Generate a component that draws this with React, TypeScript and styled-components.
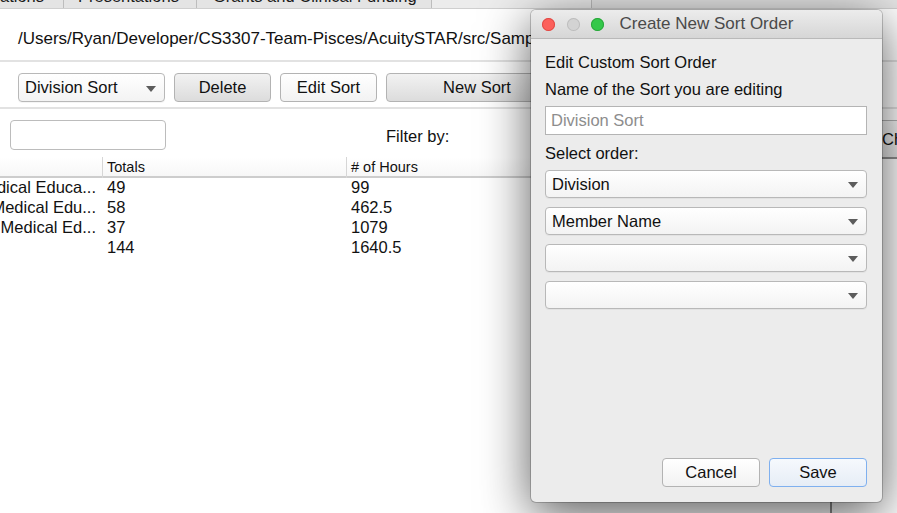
import styled, { createGlobalStyle } from "styled-components";

const GlobalStyle = createGlobalStyle`
  html, body {
    margin: 0;
    padding: 0;
    background: #ffffff;
  }
  body {
    font-family: "Liberation Sans", Arial, sans-serif;
    color: #111;
    overflow: hidden;
  }
`;

const Window = styled.div`
  position: relative;
  width: 897px;
  height: 513px;
  overflow: hidden;
  background: #ffffff;
  display: flex;
  flex-direction: column;
`;

const TabStrip = styled.div`
  display: flex;
  height: 21px;
  margin-top: -13px;
  background: #e4e4e4;
  border-bottom: 1px solid #cfcfcf;
  flex-shrink: 0;
`;

const Tab = styled.div<{ w: number; pad: number; light?: boolean }>`
  width: ${(p) => p.w}px;
  padding-left: ${(p) => p.pad}px;
  box-sizing: border-box;
  border-right: 1px solid #bdbdbd;
  background: ${(p) => (p.light ? "#ececec" : "#e4e4e4")};
  font-size: 16.5px;
  line-height: 18px;
  white-space: nowrap;
  overflow: hidden;
  color: #1a1a1a;
`;

const PathRow = styled.div`
  height: 53px;
  padding-left: 18px;
  padding-top: 8px;
  display: flex;
  align-items: center;
  box-sizing: border-box;
  font-size: 17px;
  white-space: nowrap;
  border-bottom: 2px solid #e2e2e2;
  flex-shrink: 0;
`;

const Toolbar = styled.div`
  height: 47px;
  display: flex;
  align-items: flex-start;
  gap: 9px;
  padding-left: 18px;
  padding-top: 11px;
  box-sizing: border-box;
  border-bottom: 2px solid #e2e2e2;
  flex-shrink: 0;
`;

const ComboBox = styled.div<{ w?: number; tall?: number }>`
  position: relative;
  width: ${(p) => (p.w ? `${p.w}px` : "100%")};
  height: ${(p) => p.tall ?? 28}px;
  box-sizing: border-box;
  border: 1px solid #b8b8b8;
  border-radius: 4px;
  background: linear-gradient(#ffffff, #f3f3f3);
  box-shadow: 0 1px 0 rgba(0, 0, 0, 0.04);
  display: flex;
  align-items: center;
  padding-left: 6px;
  font-size: 16.5px;
  flex-shrink: 0;
`;

const Arrow = styled.span`
  position: absolute;
  right: 8px;
  top: 50%;
  margin-top: -2px;
  width: 0;
  height: 0;
  border-left: 5px solid transparent;
  border-right: 5px solid transparent;
  border-top: 6px solid #5c5c5c;
`;

const Button = styled.div<{ w: number; shade?: "grey" | "white" | "blue" }>`
  width: ${(p) => p.w}px;
  height: 29px;
  box-sizing: border-box;
  flex-shrink: 0;
  border-radius: 4px;
  border: 1px solid
    ${(p) => (p.shade === "blue" ? "#7fb0ef" : "#b3b3b3")};
  background: ${(p) =>
    p.shade === "grey"
      ? "linear-gradient(#f2f2f2, #dcdcdc)"
      : p.shade === "blue"
      ? "linear-gradient(#f6f9fd, #e6edf6)"
      : "linear-gradient(#ffffff, #f2f2f2)"};
  display: flex;
  align-items: center;
  justify-content: center;
  font-size: 16.5px;
  color: #111;
`;

const FilterRow = styled.div`
  height: 48px;
  display: flex;
  align-items: flex-start;
  padding-left: 10px;
  padding-top: 11px;
  box-sizing: border-box;
  flex-shrink: 0;
`;

const SearchBox = styled.div`
  width: 156px;
  height: 30px;
  box-sizing: border-box;
  border: 1px solid #bcbcbc;
  border-radius: 4px;
  background: #fff;
  flex-shrink: 0;
`;

const FilterLabel = styled.div`
  margin-left: 220px;
  margin-top: 6px;
  font-size: 16.5px;
  line-height: 20px;
  flex-shrink: 0;
`;

const SideButton = styled.div`
  margin-left: auto;
  margin-right: -120px;
  width: 140px;
  height: 39px;
  box-sizing: border-box;
  border: 1px solid #b3b3b3;
  border-bottom: 2px solid #8f8f8f;
  background: linear-gradient(#f6f6f6, #e6e6e6);
  display: flex;
  align-items: center;
  padding-left: 4px;
  font-size: 16.5px;
  flex-shrink: 0;
`;

const Content = styled.div`
  flex: 1;
  display: flex;
  min-height: 0;
`;

const TablePane = styled.div`
  width: 830px;
  flex-shrink: 0;
  display: flex;
  flex-direction: column;
`;

const Divider = styled.div`
  width: 2px;
  background: #8c8c8c;
  flex-shrink: 0;
`;

const HeaderRow = styled.div`
  display: grid;
  grid-template-columns: 102px 244px 1fr;
  height: 19px;
  border-bottom: 2px solid #cdcdcd;
  background: linear-gradient(#ffffff, #f7f7f7);
`;

const HeaderCell = styled.div<{ first?: boolean }>`
  border-left: ${(p) => (p.first ? "none" : "1px solid #d6d6d6")};
  padding-left: 4px;
  font-size: 14.5px;
  line-height: 21px;
  white-space: nowrap;
`;

const Row = styled.div`
  display: grid;
  grid-template-columns: 102px 244px 1fr;
  height: 20px;
  font-size: 16.5px;
  line-height: 19px;
  white-space: nowrap;
`;

const NameCell = styled.div`
  overflow: hidden;
  display: flex;
  justify-content: flex-end;
  padding-right: 6px;
`;

const Cell = styled.div`
  padding-left: 5px;
`;

const Dialog = styled.div`
  position: absolute;
  left: 531px;
  top: 10px;
  width: 351px;
  height: 492px;
  border-radius: 5px;
  background: #ececec;
  box-shadow: 0 0 0 1px rgba(0, 0, 0, 0.2), 0 12px 50px rgba(0, 0, 0, 0.66);
  display: flex;
  flex-direction: column;
  overflow: hidden;
`;

const TitleBar = styled.div`
  height: 29px;
  flex-shrink: 0;
  box-sizing: border-box;
  background: linear-gradient(#ececec, #d6d6d6);
  border-bottom: 1px solid #b9b9b9;
  display: flex;
  align-items: center;
  padding-left: 11px;
`;

const Light = styled.span<{ fill: string; edge: string }>`
  width: 13px;
  height: 13px;
  border-radius: 50%;
  background: ${(p) => p.fill};
  box-shadow: inset 0 0 0 1px ${(p) => p.edge};
  margin-right: 11.5px;
  flex-shrink: 0;
`;

const Title = styled.div`
  margin-left: 4px;
  font-size: 17px;
  color: #4a4a4a;
  white-space: nowrap;
`;

const DialogBody = styled.div`
  flex: 1;
  display: flex;
  flex-direction: column;
  padding: 13px 15px 15px 14px;
`;

const Label = styled.div<{ gap?: number }>`
  font-size: 16.5px;
  line-height: 20px;
  margin-bottom: ${(p) => p.gap ?? 7}px;
`;

const TextField = styled.div`
  height: 29px;
  box-sizing: border-box;
  border: 1px solid #b4b4b4;
  background: #fff;
  display: flex;
  align-items: center;
  padding-left: 5px;
  font-size: 16.5px;
  color: #8d8d8d;
  margin-bottom: 8px;
`;

const OrderList = styled.div`
  display: flex;
  flex-direction: column;
  gap: 9px;
`;

const Footer = styled.div`
  margin-top: auto;
  display: flex;
  justify-content: flex-end;
  gap: 9px;
`;

const rows = [
  { name: "Undergraduate Medical Educa...", total: "49", hours: "99" },
  { name: "Postgraduate Medical Edu...", total: "58", hours: "462.5" },
  { name: "Continuing Medical Ed...", total: "37", hours: "1079" },
  { name: "", total: "144", hours: "1640.5" },
];

const orders = ["Division", "Member Name", "", ""];

export default function App() {
  return (
    <>
      <GlobalStyle />
      <Window>
        <TabStrip>
          <Tab w={64} pad={0}>
            ations
          </Tab>
          <Tab w={133} pad={14}>
            Presentations
          </Tab>
          <Tab w={235} pad={16}>
            Grants and Clinical Funding
          </Tab>
          <Tab w={160} pad={14} light />
        </TabStrip>
        <PathRow>/Users/Ryan/Developer/CS3307-Team-Pisces/AcuitySTAR/src/Sample_Data/Teaching_sample.csv</PathRow>
        <Toolbar>
          <ComboBox w={147} tall={29}>
            Division Sort
            <Arrow />
          </ComboBox>
          <Button w={97} shade="grey">
            Delete
          </Button>
          <Button w={97} shade="white">
            Edit Sort
          </Button>
          <Button w={182} shade="grey">
            New Sort
          </Button>
        </Toolbar>
        <FilterRow>
          <SearchBox />
          <FilterLabel>Filter by:</FilterLabel>
          <SideButton>Choose</SideButton>
        </FilterRow>
        <Content>
          <TablePane>
            <HeaderRow>
              <HeaderCell first />
              <HeaderCell>Totals</HeaderCell>
              <HeaderCell># of Hours</HeaderCell>
            </HeaderRow>
            {rows.map((r) => (
              <Row key={r.total}>
                <NameCell>{r.name}</NameCell>
                <Cell>{r.total}</Cell>
                <Cell>{r.hours}</Cell>
              </Row>
            ))}
          </TablePane>
          <Divider />
        </Content>

        <Dialog>
          <TitleBar>
            <Light fill="#fc605b" edge="#df4a45" />
            <Light fill="#d3d3d3" edge="#bdbdbd" />
            <Light fill="#34c84a" edge="#2aa53b" />
            <Title>Create New Sort Order</Title>
          </TitleBar>
          <DialogBody>
            <Label>Edit Custom Sort Order</Label>
            <Label>Name of the Sort you are editing</Label>
            <TextField>Division Sort</TextField>
            <Label>Select order:</Label>
            <OrderList>
              {orders.map((o, i) => (
                <ComboBox key={i}>
                  {o}
                  <Arrow />
                </ComboBox>
              ))}
            </OrderList>
            <Footer>
              <Button w={98} shade="white">
                Cancel
              </Button>
              <Button w={98} shade="blue">
                Save
              </Button>
            </Footer>
          </DialogBody>
        </Dialog>
      </Window>
    </>
  );
}
